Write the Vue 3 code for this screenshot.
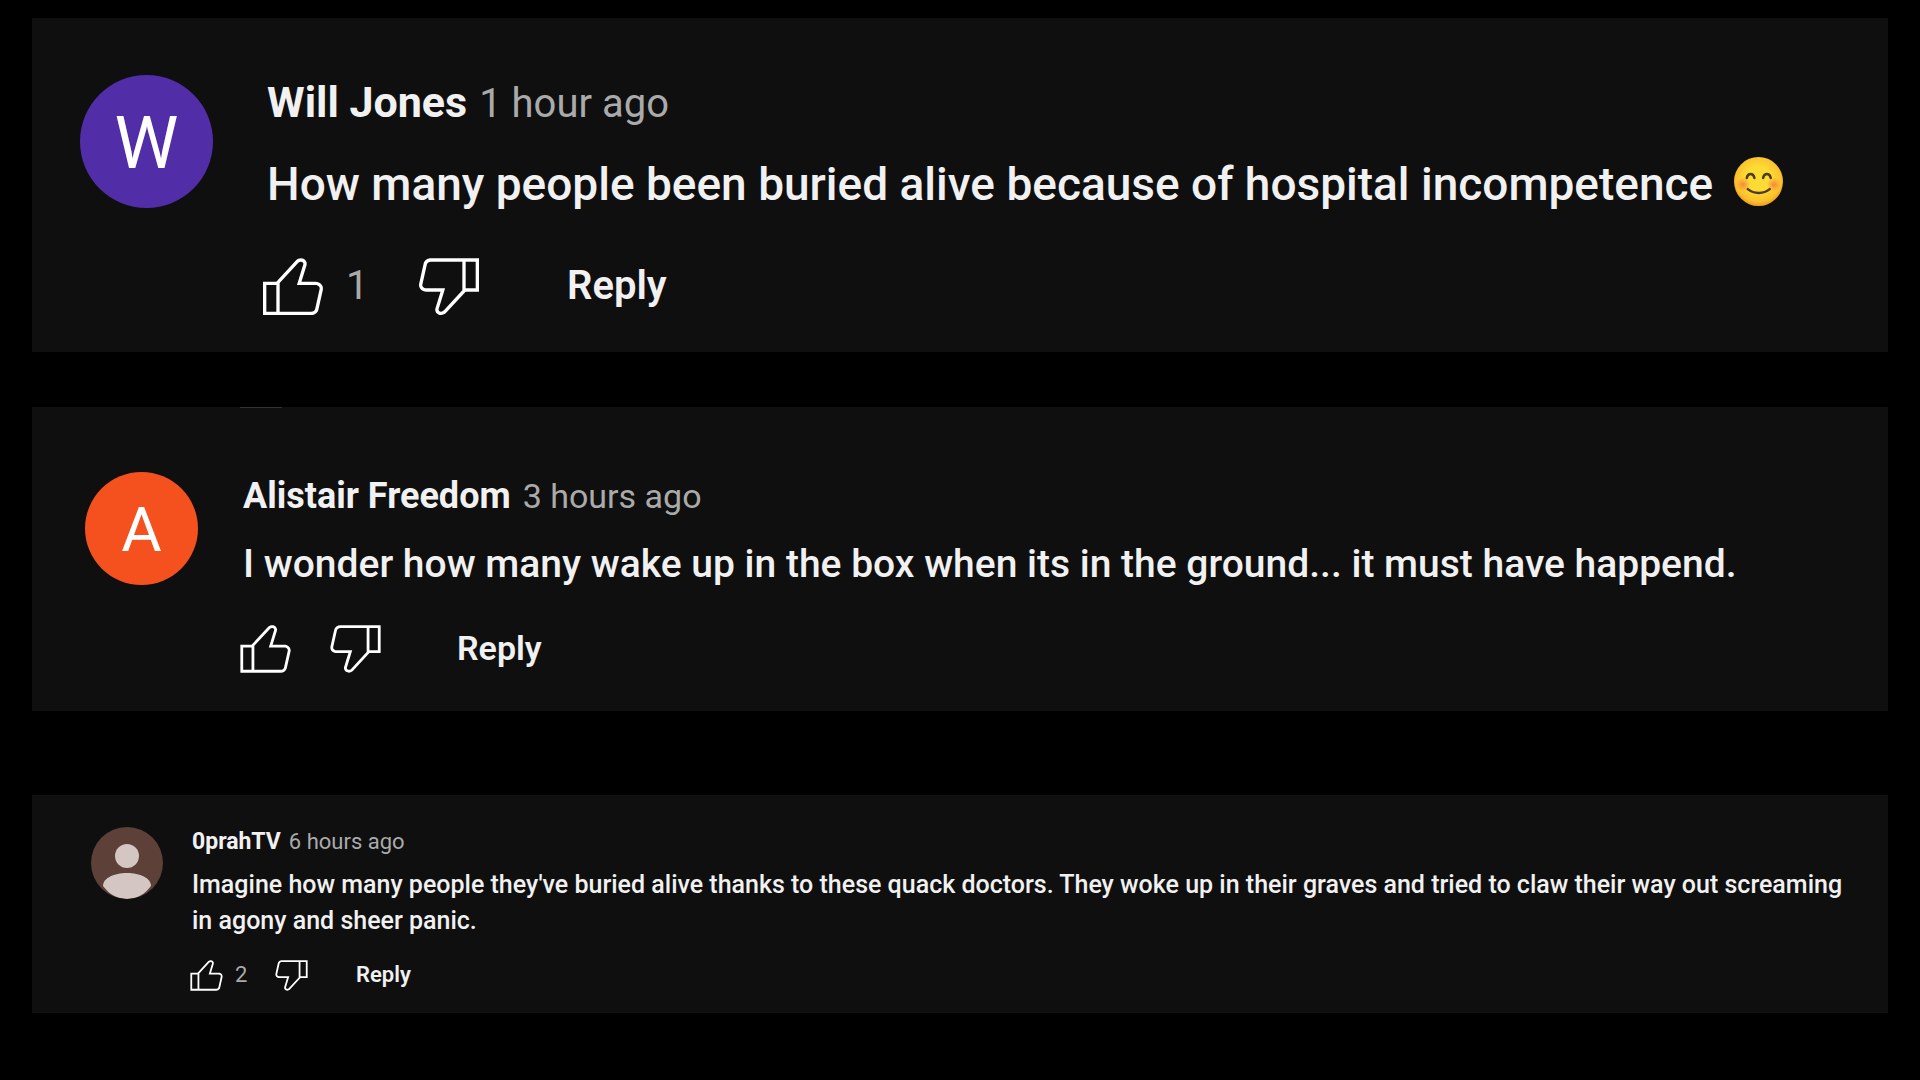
<template>
  <main class="cm-page">
    <article v-for="c in comments" :key="c.id" class="cm-card" :class="'cm-' + c.size">
      <!-- Avatar -->
      <div class="cm-avatar" :class="'tone-' + c.tone">
        <span v-if="c.initial">{{ c.initial }}</span>
        <svg v-else viewBox="0 0 72 72" aria-hidden="true">
          <circle cx="36" cy="29" r="12" />
          <path d="M12 59c0-8 11-13 24-13s24 5 24 13c-6 8-14 13-24 13s-18-5-24-13z" />
        </svg>
      </div>

      <div class="cm-main">
        <header class="cm-header">
          <a class="cm-author" href="#">{{ c.author }}</a>
          <a class="cm-time" href="#">{{ c.time }}</a>
        </header>

        <p class="cm-text">
          {{ c.text }}
          <svg v-if="c.smile" class="cm-emoji" viewBox="0 0 48 48" role="img" aria-label="Smiling face">
            <defs>
              <radialGradient id="face" cx="50%" cy="45%" r="52%">
                <stop offset="0.5" stop-color="#fddb35" />
                <stop offset="0.9" stop-color="#fbc02d" />
                <stop offset="1" stop-color="#f0a722" />
              </radialGradient>
              <radialGradient id="blush">
                <stop offset="0" stop-color="#f2733f" stop-opacity="0.75" />
                <stop offset="1" stop-color="#f2733f" stop-opacity="0" />
              </radialGradient>
            </defs>
            <circle cx="24" cy="24" r="24" fill="url(#face)" />
            <circle cx="9" cy="27" r="7" fill="url(#blush)" />
            <circle cx="39" cy="27" r="7" fill="url(#blush)" />
            <g fill="none" stroke="#4e3a1c" stroke-width="2.4" stroke-linecap="round">
              <path d="M12.500 20.500c1-5 6.500-5 7.500 0" />
              <path d="M28.500 20.500c1-5 6.500-5 7.500 0" />
              <path d="M13.500 31.500c6 5 15.500 5 21.500 0" />
            </g>
          </svg>
        </p>

        <!-- Like / dislike / reply -->
        <div class="cm-actions">
          <button class="cm-icon-btn" type="button" aria-label="Like">
            <svg viewBox="0 0 24 24"><path :d="likePath" /></svg>
          </button>
          <span class="cm-count">{{ c.likes }}</span>
          <button class="cm-icon-btn" type="button" aria-label="Dislike">
            <svg viewBox="0 0 24 24"><path :d="dislikePath" /></svg>
          </button>
          <button class="cm-reply" type="button">Reply</button>
        </div>
      </div>
    </article>
  </main>
</template>

<script setup>
const comments = [
  {
    id: 1,
    size: 'lg',
    tone: 'purple',
    initial: 'W',
    author: 'Will Jones',
    time: '1 hour ago',
    text: 'How many people been buried alive because of hospital incompetence',
    smile: true,
    likes: '1',
  },
  {
    id: 2,
    size: 'md',
    tone: 'orange',
    initial: 'A',
    author: 'Alistair Freedom',
    time: '3 hours ago',
    text: 'I wonder how many wake up in the box when its in the ground... it must have happend.',
    likes: '',
  },
  {
    id: 3,
    size: 'sm',
    tone: 'brown',
    author: '0prahTV',
    time: '6 hours ago',
    text: "Imagine how many people they've buried alive thanks to these quack doctors. They woke up in their graves and tried to claw their way out screaming in agony and sheer panic.",
    likes: '2',
  },
]

const likePath =
  'M18.77,11h-4.23l1.52-4.94C16.38,5.03,15.54,4,14.38,4c-0.58,0-1.14,0.24-1.52,0.65L7,11H3v10h4h1h9.43c1.06,0,1.98-0.67,2.19-1.61l1.34-6C21.23,12.15,20.18,11,18.77,11z M7,20H4v-8h3V20z M19.98,13.17l-1.34,6C18.54,19.65,18.03,20,17.43,20H8v-8.61l5.6-6.06C13.79,5.12,14.08,5,14.38,5c0.26,0,0.5,0.11,0.63,0.3c0.07,0.1,0.15,0.26,0.09,0.47l-1.52,4.94L13.18,12h1.35h4.23c0.41,0,0.8,0.17,1.03,0.46C19.92,12.61,20.05,12.86,19.98,13.17z'
const dislikePath =
  'M17,4h-1H6.57C5.5,4,4.59,4.67,4.38,5.61l-1.34,6C2.77,12.85,3.82,14,5.23,14h4.23l-1.52,4.94C7.62,19.97,8.46,21,9.62,21c0.58,0,1.14-0.24,1.52-0.65L17,14h4V4H17z M10.4,19.67C10.21,19.88,9.92,20,9.62,20c-0.26,0-0.5-0.11-0.63-0.3c-0.07-0.1-0.15-0.26-0.09-0.47l1.52-4.94l0.4-1.29H9.46H5.23c-0.41,0-0.8-0.17-1.03-0.46c-0.12-0.15-0.25-0.4-0.18-0.72l1.34-6C5.46,5.35,5.97,5,6.57,5H16v8.61L10.4,19.67z M20,13h-3V5h3V13z'
</script>

<style>
body { background: #000; }
</style>

<style scoped>
.cm-page {
  padding: 18px 32px;
  font-family: Roboto, 'Liberation Sans', sans-serif;
  color: #f1f1f1;
}

.cm-card {
  display: flex;
  align-items: flex-start;
  background: #0f0f0f;
}

.cm-avatar {
  display: flex;
  align-items: center;
  justify-content: center;
  flex-shrink: 0;
  box-sizing: border-box;
  border-radius: 50%;
  overflow: hidden;
  color: #fff;
}
.cm-avatar svg { width: 100%; height: 100%; fill: #d3c6c3; }
.tone-purple { background: #512da8; }
.tone-orange { background: #f4511e; }
.tone-brown { background: #5d4037; }

.cm-main { flex: 1; min-width: 0; }

.cm-header { display: flex; align-items: baseline; }
.cm-author { color: #f1f1f1; font-weight: 700; text-decoration: none; }
.cm-time { color: #aaa; text-decoration: none; }

.cm-text { margin: 0; font-weight: 500; }
.cm-emoji { width: 49px; height: 49px; margin-left: 9px; vertical-align: -6px; }

.cm-actions { display: flex; align-items: center; }
.cm-icon-btn,
.cm-reply {
  padding: 0;
  border: none;
  background: none;
  color: #f1f1f1;
  font-family: inherit;
  cursor: pointer;
}
.cm-icon-btn svg { display: block; width: 100%; height: 100%; fill: #fff; }
.cm-reply { font-weight: 600; }
.cm-count { color: #aaa; }

/* Large */
.cm-lg { padding: 57px 32px 27px 48px; }
.cm-lg .cm-avatar { width: 133px; height: 133px; margin-right: 54px; padding-top: 4px; font-size: 72px; }
.cm-lg .cm-header { gap: 12px; font-size: 43px; line-height: 54px; }
.cm-lg .cm-time { font-size: 40px; }
.cm-lg .cm-text { margin-top: 20px; font-size: 46px; line-height: 67px; }
.cm-lg .cm-actions { margin: 27px 0 0 -14px; font-size: 40px; }
.cm-lg .cm-icon-btn { width: 80px; height: 80px; }
.cm-lg .cm-count { width: 63px; margin-left: 13px; }
.cm-lg .cm-reply { margin-left: 78px; font-size: 40px; }

/* Medium, with the rule of the thread above showing at its top edge */
.cm-md {
  margin-top: 55px;
  padding: 65px 32px 30px 53px;
  background: linear-gradient(#333, #333) 208px 0 / 42px 1px no-repeat #0f0f0f;
}
.cm-md .cm-avatar { width: 113px; height: 113px; margin-right: 45px; padding-top: 2px; font-size: 62px; }
.cm-md .cm-header { gap: 12px; font-size: 36px; line-height: 48px; }
.cm-md .cm-time { font-size: 34px; }
.cm-md .cm-text { margin-top: 16px; font-size: 39px; line-height: 56px; }
.cm-md .cm-actions { margin: 22px 0 0 -11px; font-size: 34px; }
.cm-md .cm-icon-btn { width: 67px; height: 67px; }
.cm-md .cm-count { width: 23px; }
.cm-md .cm-reply { margin-left: 68px; font-size: 34px; }

/* Small */
.cm-sm { margin-top: 84px; padding: 32px 36px 17px 59px; }
.cm-sm .cm-avatar { width: 72px; height: 72px; margin-right: 29px; }
.cm-sm .cm-header { gap: 8px; font-size: 23px; line-height: 30px; }
.cm-sm .cm-time { font-size: 22px; }
.cm-sm .cm-text { margin-top: 10px; font-size: 25px; line-height: 36px; }
.cm-sm .cm-actions { margin: 14px 0 0 -7px; font-size: 22px; }
.cm-sm .cm-icon-btn { width: 43px; height: 43px; }
.cm-sm .cm-count { width: 35px; margin-left: 7px; }
.cm-sm .cm-reply { margin-left: 43px; font-size: 22px; }
</style>
